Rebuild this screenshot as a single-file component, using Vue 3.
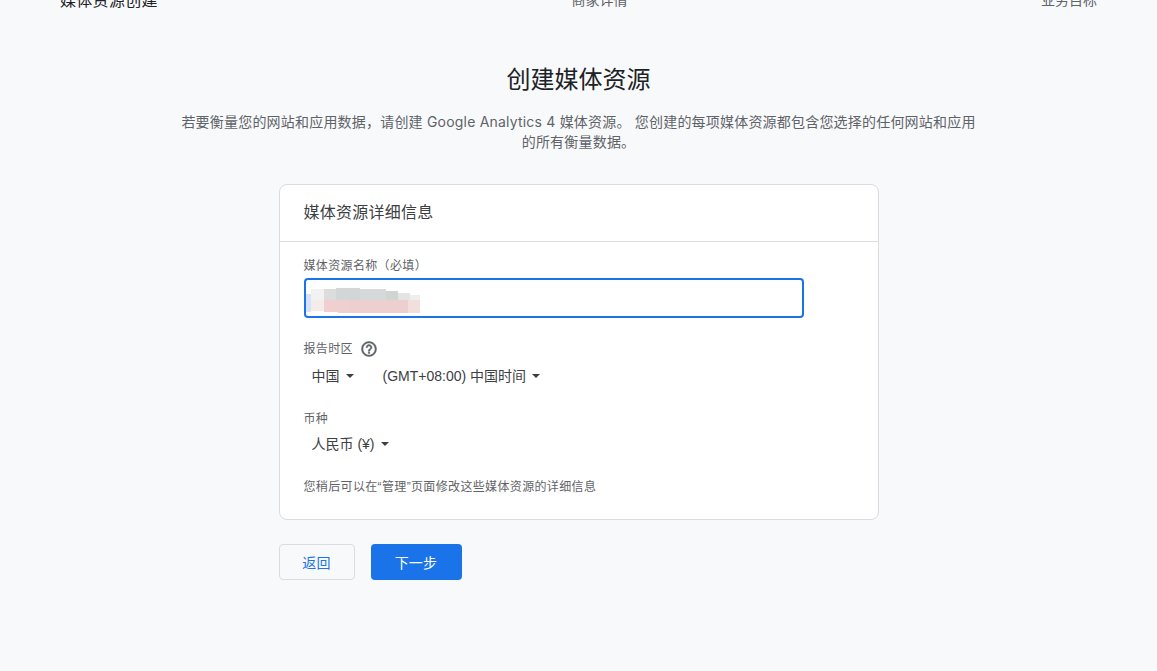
<script setup>
const steps = [
  { text: '媒体资源创建', cls: 'active' },
  { text: '商家详情', cls: '' },
  { text: '业务目标', cls: '' },
]
const topBlur = [
  { x: 0, w: 6, h: 6, c: '#d3e3fb' }, { x: 6, w: 13, h: 11, c: '#f2f2f2' }, { x: 19, w: 12, h: 11, c: '#dcdcdc' },
  { x: 31, w: 24, h: 12, c: '#d2d6d6' }, { x: 55, w: 26, h: 11, c: '#d6d9d9' },
  { x: 81, w: 12, h: 9, c: '#d0d4d2' }, { x: 93, w: 12, h: 7, c: '#e4e4e4' }, { x: 105, w: 10, h: 5, c: '#eeeeee' },
]
const bottomBlur = [
  { x: 0, w: 6, h: 12, c: '#d3e3fb' }, { x: 6, w: 13, h: 11, c: '#f5ebeb' }, { x: 19, w: 14, h: 12, c: '#efcfcf' },
  { x: 33, w: 10, h: 13, c: '#efd0d0' }, { x: 43, w: 60, h: 13, c: '#eecfcf' }, { x: 103, w: 12, h: 13, c: '#f3dede' },
]
</script>

<template>
  <main class="page">
    <header class="steps">
      <span v-for="s in steps" :key="s.text" class="step" :class="s.cls">{{ s.text }}</span>
    </header>

    <h1 class="title">创建媒体资源</h1>
    <p class="intro">若要衡量您的网站和应用数据，请创建 Google Analytics 4 媒体资源。 您创建的每项媒体资源都包含您选择的任何网站和应用的所有衡量数据。</p>

    <section class="card">
      <h2 class="card-title">媒体资源详细信息</h2>
      <div class="card-body">
        <label class="label">媒体资源名称（必填）</label>
        <div class="input">
          <div class="smear">
            <div class="smear-row top">
              <i v-for="b in topBlur" :key="b.x" :style="{ width: b.w + 'px', height: b.h + 'px', background: b.c }"></i>
            </div>
            <div class="smear-row">
              <i v-for="b in bottomBlur" :key="b.x" :style="{ width: b.w + 'px', height: b.h + 'px', background: b.c }"></i>
            </div>
          </div>
        </div>

        <div class="label tz-label">
          <span>报告时区</span>
          <svg class="help" width="18" height="18" viewBox="0 0 24 24" fill="#5f6368" stroke="#5f6368" stroke-width="0.6">
            <path d="M11 18h2v-2h-2v2zm1-16C6.48 2 2 6.48 2 12s4.48 10 10 10 10-4.48 10-10S17.52 2 12 2zm0 18c-4.41 0-8-3.59-8-8s3.59-8 8-8 8 3.59 8 8-3.59 8-8 8zm0-14c-2.21 0-4 1.79-4 4h2c0-1.1.9-2 2-2s2 .9 2 2c0 2-3 1.75-3 5h2c0-2.25 3-2.5 3-5 0-2.21-1.79-4-4-4z"/>
          </svg>
        </div>
        <div class="selects">
          <span class="select country">中国<b class="caret"></b></span>
          <span class="select">(GMT+08:00) 中国时间<b class="caret"></b></span>
        </div>

        <div class="label currency-label">币种</div>
        <div class="selects currency">
          <span class="select">人民币 (¥)<b class="caret"></b></span>
        </div>

        <p class="hint">您稍后可以在“管理”页面修改这些媒体资源的详细信息</p>
      </div>
    </section>

    <div class="actions">
      <button class="btn back">返回</button>
      <button class="btn next">下一步</button>
    </div>
  </main>
</template>

<style>
html, body { margin: 0; background: #f8f9fb; }
</style>

<style scoped>
.page {
  height: 671px;
  overflow: hidden;
  background: #f8f9fb;
  font-family: "Liberation Sans", "Noto Sans CJK SC", sans-serif;
  color: #202124;
  display: flex;
  flex-direction: column;
  align-items: center;
}
.steps {
  width: 100%;
  height: 8px;
  overflow: hidden;
  box-sizing: border-box;
  padding: 0 60px;
  display: flex;
  justify-content: space-between;
  font-size: 14px;
  line-height: 16px;
  color: #5f6368;
}
.step { margin-top: -8px; display: block; }
.step.active { color: #202124; font-size: 16px; letter-spacing: 0.3px; margin-top: -7px; }
.title {
  margin: 54px 0 0;
  font-size: 24px;
  line-height: 36px;
  font-weight: 400;
}
.intro {
  width: 800px;
  margin: 14px 0 0;
  text-align: center;
  font-family: Inter, "Noto Sans CJK SC", sans-serif;
  font-size: 14px;
  letter-spacing: 0.2px;
  line-height: 20px;
  color: #5f6368;
}
.card {
  width: 600px;
  height: 336px;
  box-sizing: border-box;
  margin-top: 32px;
  background: #fff;
  border: 1px solid #dadce0;
  border-radius: 8px;
}
.card-title {
  margin: 0;
  height: 57px;
  box-sizing: border-box;
  padding: 0 24px;
  font-size: 16px;
  letter-spacing: 0.25px;
  line-height: 55px;
  font-weight: 400;
  color: #3c4043;
  border-bottom: 1px solid #dadce0;
}
.card-body { padding: 15px 24px 0; }
.label {
  display: block;
  font-size: 12px;
  letter-spacing: 0.35px;
  line-height: 18px;
  color: #5f6368;
}
.input {
  width: 500px;
  height: 40px;
  box-sizing: border-box;
  margin-top: 3px;
  border: 2px solid #1a73e8;
  border-radius: 4px;
  padding-top: 8px;
  overflow: hidden;
}
.smear { width: 115px; margin-left: -1px; }
.smear-row { display: flex; height: 12px; }
.smear-row.top { align-items: flex-end; }
.smear-row i { display: block; flex: none; }
.tz-label {
  display: flex;
  align-items: center;
  gap: 7px;
  margin-top: 22px;
}
.help { flex: none; }
.selects {
  display: flex;
  gap: 29px;
  margin-top: 6px;
  padding-left: 8px;
  font-size: 14px;
  line-height: 24px;
  color: #3c4043;
}
.select { display: inline-flex; align-items: center; }
.caret {
  width: 0;
  height: 0;
  margin-left: 6px;
  border: 4px solid transparent;
  border-top-color: #3c4043;
  border-bottom: 0;
}
.currency-label { margin-top: 22px; }
.currency { margin-top: 4px; }
.hint {
  margin: 22px 0 0;
  font-size: 12px;
  letter-spacing: 0.35px;
  line-height: 18px;
  color: #5f6368;
}
.actions {
  width: 600px;
  display: flex;
  gap: 16px;
  margin-top: 24px;
}
.btn {
  height: 36px;
  border-radius: 4px;
  font-family: inherit;
  font-size: 14px;
  letter-spacing: 0.25px;
  padding: 0;
}
.back {
  width: 76px;
  background: transparent;
  border: 1px solid #dadce0;
  color: #1a73e8;
}
.next {
  width: 91px;
  background: #1a73e8;
  border: 0;
  color: #fff;
}
</style>
